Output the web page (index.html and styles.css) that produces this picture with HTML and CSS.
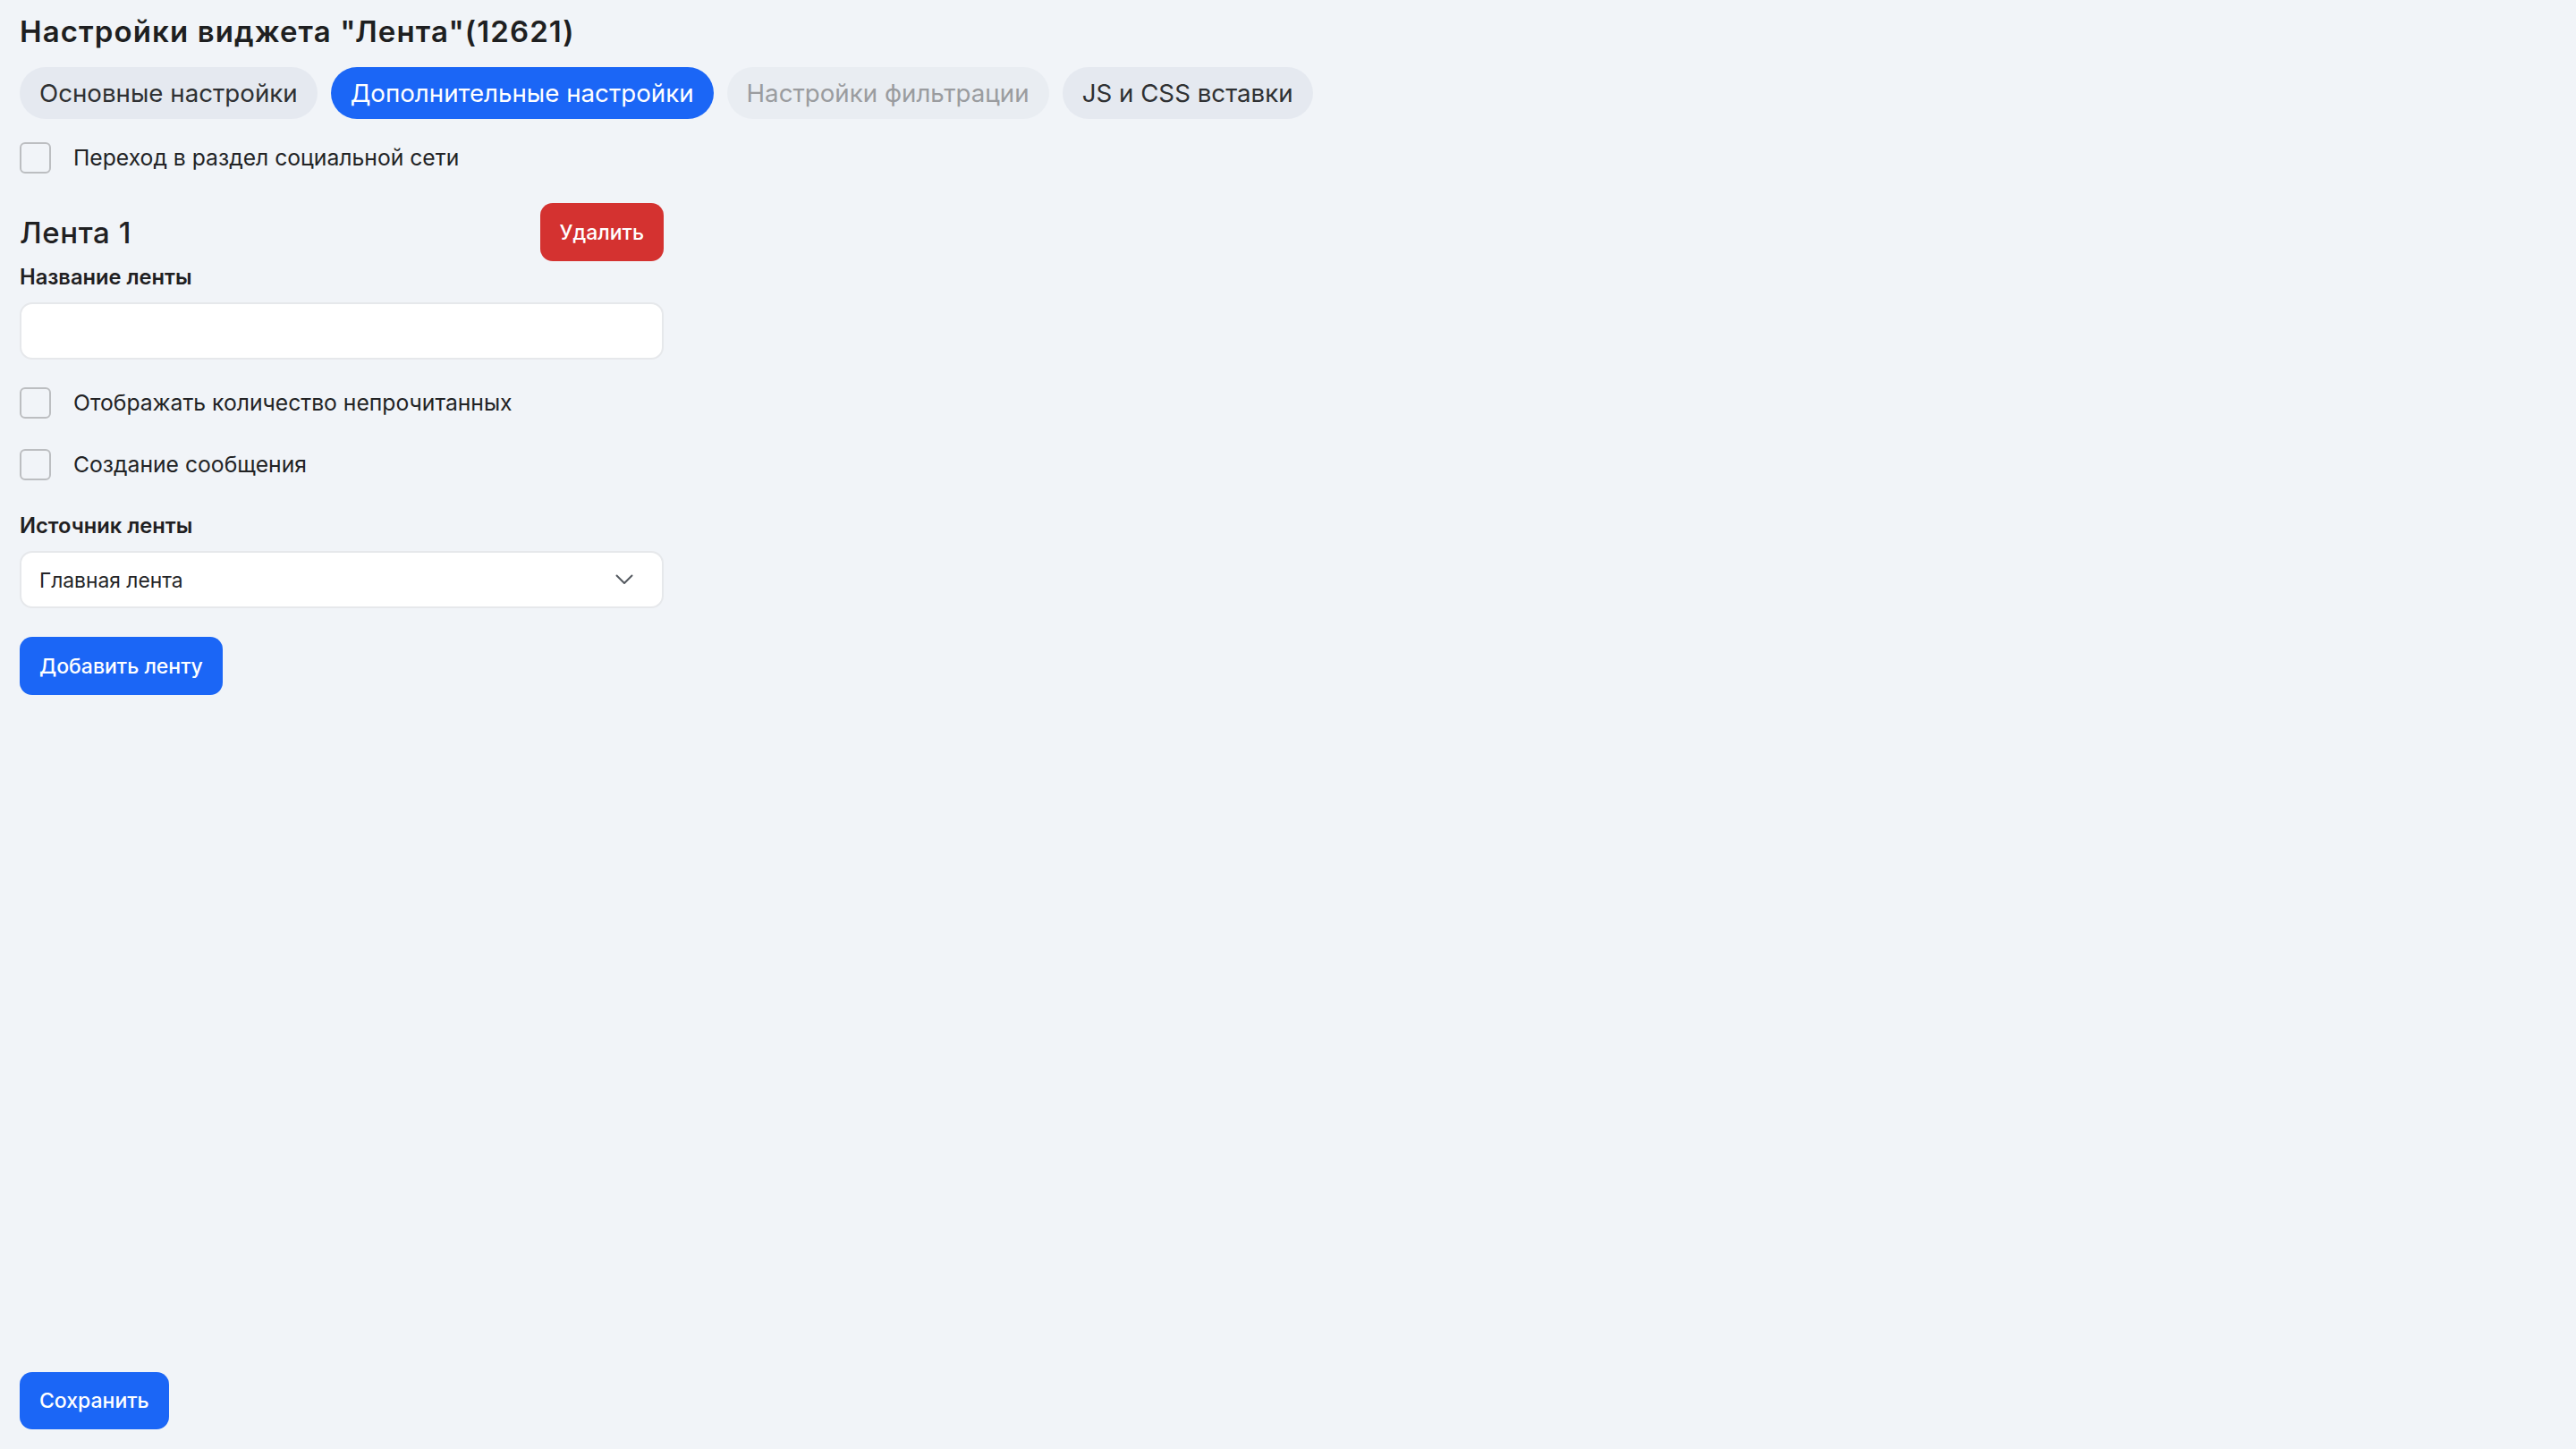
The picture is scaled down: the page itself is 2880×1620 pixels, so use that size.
FILE: index.html
```html
<!DOCTYPE html>
<html lang="ru">
<head>
<meta charset="utf-8">
<title>Настройки виджета "Лента"</title>
<link rel="stylesheet" href="styles.css">
</head>
<body>
<div class="page">
  <main class="content">
    <h1 class="page-title">Настройки виджета "Лента"(12621)</h1>

    <nav class="tabs">
      <button class="tab">Основные настройки</button>
      <button class="tab tab-active">Дополнительные настройки</button>
      <button class="tab tab-disabled">Настройки фильтрации</button>
      <button class="tab">JS и CSS вставки</button>
    </nav>

    <label class="check check-top">
      <span class="check-box"></span>
      <span class="check-label">Переход в раздел социальной сети</span>
    </label>

    <section class="feed">
      <div class="feed-head">
        <h2 class="feed-title">Лента 1</h2>
        <button class="btn btn-danger">Удалить</button>
      </div>

      <div class="field">
        <div class="field-label">Название ленты</div>
        <div class="input"></div>
      </div>

      <label class="check check-first">
        <span class="check-box"></span>
        <span class="check-label">Отображать количество непрочитанных</span>
      </label>
      <label class="check check-next">
        <span class="check-box"></span>
        <span class="check-label">Создание сообщения</span>
      </label>

      <div class="field field-source">
        <div class="field-label">Источник ленты</div>
        <div class="select">
          <span class="select-value">Главная лента</span>
          <svg class="select-arrow" width="20" height="12" viewBox="0 0 20 12" aria-hidden="true">
            <path d="M1.5 1.5 L10 10 L18.5 1.5" fill="none" stroke="#555a60" stroke-width="2" stroke-linecap="round" stroke-linejoin="round"/>
          </svg>
        </div>
      </div>

      <button class="btn btn-primary btn-add">Добавить ленту</button>
    </section>
  </main>

  <footer class="footer">
    <button class="btn btn-primary btn-save">Сохранить</button>
  </footer>
</div>
</body>
</html>
```

FILE: styles.css
```css
html, body {
  margin: 0;
  padding: 0;
}

body {
  background: #f1f4f8;
  font-family: Inter, "Noto Sans", sans-serif;
  color: #222325;
}

.page {
  min-height: 100vh;
  box-sizing: border-box;
  display: flex;
  flex-direction: column;
  padding: 16px 22px 22px;
}

.content {
  display: flex;
  flex-direction: column;
  align-items: flex-start;
}

.page-title {
  margin: 0;
  font-size: 33px;
  line-height: 38px;
  font-weight: 600;
  letter-spacing: 1.1px;
  color: #1e1f21;
}

/* tab bar */
.tabs {
  display: flex;
  gap: 15px;
  margin-top: 21px;
}

.tab {
  height: 58px;
  padding: 0 22px;
  border: none;
  border-radius: 29px;
  background: #e5e9f0;
  color: #2f3133;
  font-family: inherit;
  font-size: 27.7px;
  font-weight: 400;
  cursor: pointer;
}

.tab-active {
  background: #1b66f6;
  color: #ffffff;
}

.tab-disabled {
  background: #e9edf2;
  color: #9a9c9f;
}

/* checkboxes */
.check {
  display: flex;
  align-items: center;
  gap: 25px;
}

.check-box {
  width: 35px;
  height: 35px;
  box-sizing: border-box;
  border: 2px solid #bcbec1;
  border-radius: 6px;
  flex: none;
}

.check-label {
  font-size: 24.7px;
  line-height: 36px;
  color: #222325;
}

.check-top {
  margin-top: 25px;
}

.check-first {
  margin-top: 30px;
}

.check-next {
  margin-top: 33px;
}

/* feed block */
.feed {
  width: 720px;
  display: flex;
  flex-direction: column;
  align-items: flex-start;
  margin-top: 33px;
}

.feed-head {
  width: 100%;
  display: flex;
  justify-content: space-between;
  align-items: center;
}

.feed-title {
  margin: 0;
  font-size: 33px;
  line-height: 38px;
  font-weight: 500;
  letter-spacing: 0.6px;
  color: #1f2022;
}

.field {
  width: 100%;
  display: flex;
  flex-direction: column;
}

.field-label {
  font-size: 23.7px;
  line-height: 36px;
  font-weight: 600;
  color: #1f2022;
  margin-bottom: 10px;
}

.field-source {
  margin-top: 33px;
}

.input,
.select {
  width: 100%;
  height: 64px;
  box-sizing: border-box;
  background: #ffffff;
  border: 2px solid #e6e8eb;
  border-radius: 14px;
}

.select {
  display: flex;
  align-items: center;
  justify-content: space-between;
  padding: 0 32px 0 20px;
}

.select-value {
  font-size: 22.8px;
  color: #242527;
}

.select-arrow {
  display: block;
}

/* buttons */
.btn {
  border: none;
  font-family: inherit;
  font-size: 23px;
  font-weight: 500;
  color: #ffffff;
  border-radius: 14px;
  cursor: pointer;
}

.btn-danger {
  height: 65px;
  padding: 0 22px;
  background: #d43230;
}

.btn-primary {
  background: #1b66f6;
}

.btn-add {
  height: 65px;
  padding: 0 22px;
  margin-top: 32px;
}

.footer {
  margin-top: auto;
}

.btn-save {
  height: 64px;
  padding: 0 22px;
}
```
